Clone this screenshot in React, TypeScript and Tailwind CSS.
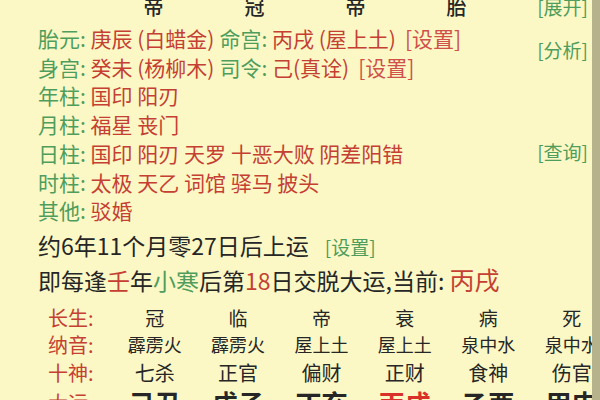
import React from "react";

const GREEN = "text-[#4f9d5c]";
const RED = "text-[#c53f33]";

interface InfoLine
{
	label: string;
	body:  React.ReactNode;
}

const info_lines: InfoLine[] =
[
	{
		label: "胎元",
		body: (
			<>
				<span className={RED}>庚辰 (白蜡金)</span>
				<span className={`${GREEN} ml-[5px]`}>命宫: </span>
				<span className={RED}>丙戌 (屋上土)</span>
				<span className="text-[#d0504a] ml-[9px]">[设置]</span>
			</>
		),
	},
	{
		label: "身宫",
		body: (
			<>
				<span className={RED}>癸未 (杨柳木)</span>
				<span className={`${GREEN} ml-[5px]`}>司令: </span>
				<span className={RED}>己(真诠)</span>
				<span className="text-[#d0504a] ml-[9px]">[设置]</span>
			</>
		),
	},
	{ label: "年柱", body: <span className={RED}>国印 阳刃</span> },
	{ label: "月柱", body: <span className={RED}>福星 丧门</span> },
	{ label: "日柱", body: <span className={RED}>国印 阳刃 天罗 十恶大败 阴差阳错</span> },
	{ label: "时柱", body: <span className={RED}>太极 天乙 词馆 驿马 披头</span> },
	{ label: "其他", body: <span className={RED}>驳婚</span> },
];

const table_rows =
[
	{ label: "长生", cells: ["冠", "临", "帝", "衰", "病", "死"], size: "text-[19px]" },
	{ label: "纳音", cells: ["霹雳火", "霹雳火", "屋上土", "屋上土", "泉中水", "泉中水"], size: "text-[18px]" },
	{ label: "十神", cells: ["七杀", "正官", "偏财", "正财", "食神", "伤官"], size: "text-[20px]" },
];

const dayun = ["己丑", "戊子", "丁亥", "丙戌", "乙酉", "甲申"];

export default function App()
{
	return (
		<div
			className="relative w-[600px] h-[400px] overflow-hidden bg-[#fbf8c5] text-[#262626]"
			style={{ fontFamily: '"Noto Sans CJK SC", "Noto Sans", sans-serif' }}
		>
			{/* Pillar header, cut at the top */}
			<div className="grid grid-cols-[103px_101px_101px_101px_101px_1fr] h-[22px] leading-[22px] -mt-[4px] text-[20px] font-medium">
				<div />
				<div className="text-center">帝</div>
				<div className="text-center">冠</div>
				<div className="text-center">帝</div>
				<div className="text-center">胎</div>
				<div className={`${GREEN} text-[19px] font-normal text-right pr-[12px]`}>[展开]</div>
			</div>

			{/* Info block */}
			<div className="flex mt-[6px] pl-[38px] pr-[12px]">
				<div className="flex-1 flex flex-col text-[21px] leading-[28.7px] whitespace-nowrap">
					{info_lines.map((line, i) => (
						<div key={i}>
							<span className={GREEN}>{line.label}: </span>
							{line.body}
						</div>
					))}
				</div>
				<div className={`flex flex-col text-[19px] leading-[28px] ${GREEN}`}>
					<div className="mt-[12px]">[分析]</div>
					<div className="mt-[74px]">[查询]</div>
				</div>
			</div>

			{/* Dayun start */}
			<div className="mt-[4px] pl-[38px] text-[23px] leading-[33px] whitespace-nowrap">
				<div>
					约6年11个月零27日后上运
					<span className={`${GREEN} text-[19px] ml-[16px]`}>[设置]</span>
				</div>
				<div>
					即每逢<span className={RED}>壬</span>年<span className={GREEN}>小寒</span>后第<span className={RED}>18</span>日交脱大运,当前: <span className={`${RED} text-[25px]`}>丙戌</span>
				</div>
			</div>

			{/* Dayun table */}
			<div className="mt-[7px] grid grid-cols-[113px_repeat(6,83.4px)] whitespace-nowrap">
				{table_rows.map((row) => (
					<React.Fragment key={row.label}>
						<div className={`${RED} text-[20px] leading-[27.5px] pl-[48px]`}>{row.label}:</div>
						{row.cells.map((c, j) => (
							<div key={j} className={`${row.size} leading-[27.5px] text-center`}>{c}</div>
						))}
					</React.Fragment>
				))}
				<div className={`${RED} text-[20px] leading-[34px] pl-[48px]`}>大运:</div>
				{dayun.map((d, j) => (
					<div key={j} className={`text-[26px] font-bold leading-[34px] text-center ${j === 3 ? "text-[#d9302a]" : ""}`}>{d}</div>
				))}
			</div>

			{/* Scrollbar strip */}
			<div className="absolute top-0 right-0 w-[8px] h-full bg-[#b6b38c]" />
		</div>
	);
}
